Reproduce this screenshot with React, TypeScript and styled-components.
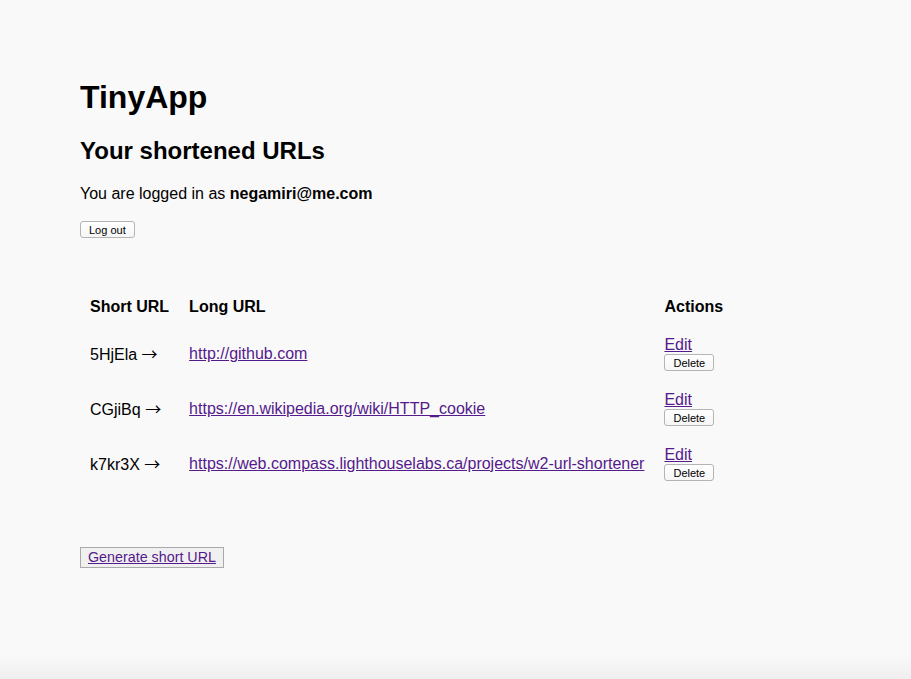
import React from "react";
import styled, { createGlobalStyle } from "styled-components";

const Global = createGlobalStyle`
  html, body { margin: 0; padding: 0; min-height: 100%; }
  html { background: #f9f9f9; }
  body {
    min-height: 679px;
    font-family: "Liberation Sans", Arial, Helvetica, sans-serif;
    color: #000;
    background: linear-gradient(to bottom, #f9f9f9 0, #f9f9f9 655px, #efefef 679px);
  }
`;

const Page = styled.main`
  padding: 58px 80px 40px 80px;
`;

const Title = styled.h1`
  font-size: 32px;
  font-weight: bold;
  margin: 21px 0 21px;
`;

const Subtitle = styled.h2`
  font-size: 24px;
  font-weight: bold;
  margin: 0 0 20px;
`;

const Info = styled.p`
  font-size: 16px;
  margin: 0 0 18px;
`;

const SmallButton = styled.button`
  display: block;
  font-family: "Liberation Sans", Arial, Helvetica, sans-serif;
  font-size: 11px;
  line-height: 14px;
  padding: 1px 8px 0;
  border: 1px solid #b4b4b4;
  border-radius: 3px;
  background: linear-gradient(#ffffff, #f6f6f6);
  color: #000;
  cursor: pointer;
`;

const LogoutForm = styled.form`
  margin: 0 0 50px;
`;

const Table = styled.table`
  border-collapse: collapse;
  border-spacing: 0;
  font-size: 16px;
`;

const Th = styled.th`
  text-align: left;
  padding: 10px;
  font-weight: bold;
`;

const Td = styled.td`
  padding: 10px;
  vertical-align: middle;
  line-height: 18px;
`;

const Arrow = styled.span`
  font-family: "Noto Sans CJK SC", "DejaVu Sans", sans-serif;
  font-size: 16px;
  line-height: 18px;
`;

const Link = styled.a`
  color: #551a8b;
  text-decoration: underline;
`;

const GenerateButton = styled.button`
  display: block;
  margin-top: 56px;
  font-family: "Liberation Sans", Arial, Helvetica, sans-serif;
  font-size: 14.3px;
  line-height: 17px;
  padding: 1px 7px;
  border: 1px solid #a9a9a9;
  border-radius: 0;
  background: #f0f0f0;
  color: #551a8b;
  text-decoration: underline;
  cursor: pointer;
`;

const rows = [
  { id: "5HjEla", url: "http://github.com" },
  { id: "CGjiBq", url: "https://en.wikipedia.org/wiki/HTTP_cookie" },
  { id: "k7kr3X", url: "https://web.compass.lighthouselabs.ca/projects/w2-url-shortener" },
];

export default function App() {
  return (
    <>
      <Global />
      <Page>
        <Title>TinyApp</Title>
        <Subtitle>Your shortened URLs</Subtitle>
        <Info>
          You are logged in as <b>negamiri@me.com</b>
        </Info>
        <LogoutForm onSubmit={(e) => e.preventDefault()}>
          <SmallButton type="submit">Log out</SmallButton>
        </LogoutForm>
        <Table>
          <thead>
            <tr>
              <Th>Short URL</Th>
              <Th>Long URL</Th>
              <Th>Actions</Th>
            </tr>
          </thead>
          <tbody>
            {rows.map((r) => (
              <tr key={r.id}>
                <Td>
                  {r.id} <Arrow>→</Arrow>
                </Td>
                <Td>
                  <Link href="#">{r.url}</Link>
                </Td>
                <Td>
                  <Link href="#">Edit</Link>
                  <SmallButton type="button">Delete</SmallButton>
                </Td>
              </tr>
            ))}
          </tbody>
        </Table>
        <GenerateButton type="button">Generate short URL</GenerateButton>
      </Page>
    </>
  );
}
